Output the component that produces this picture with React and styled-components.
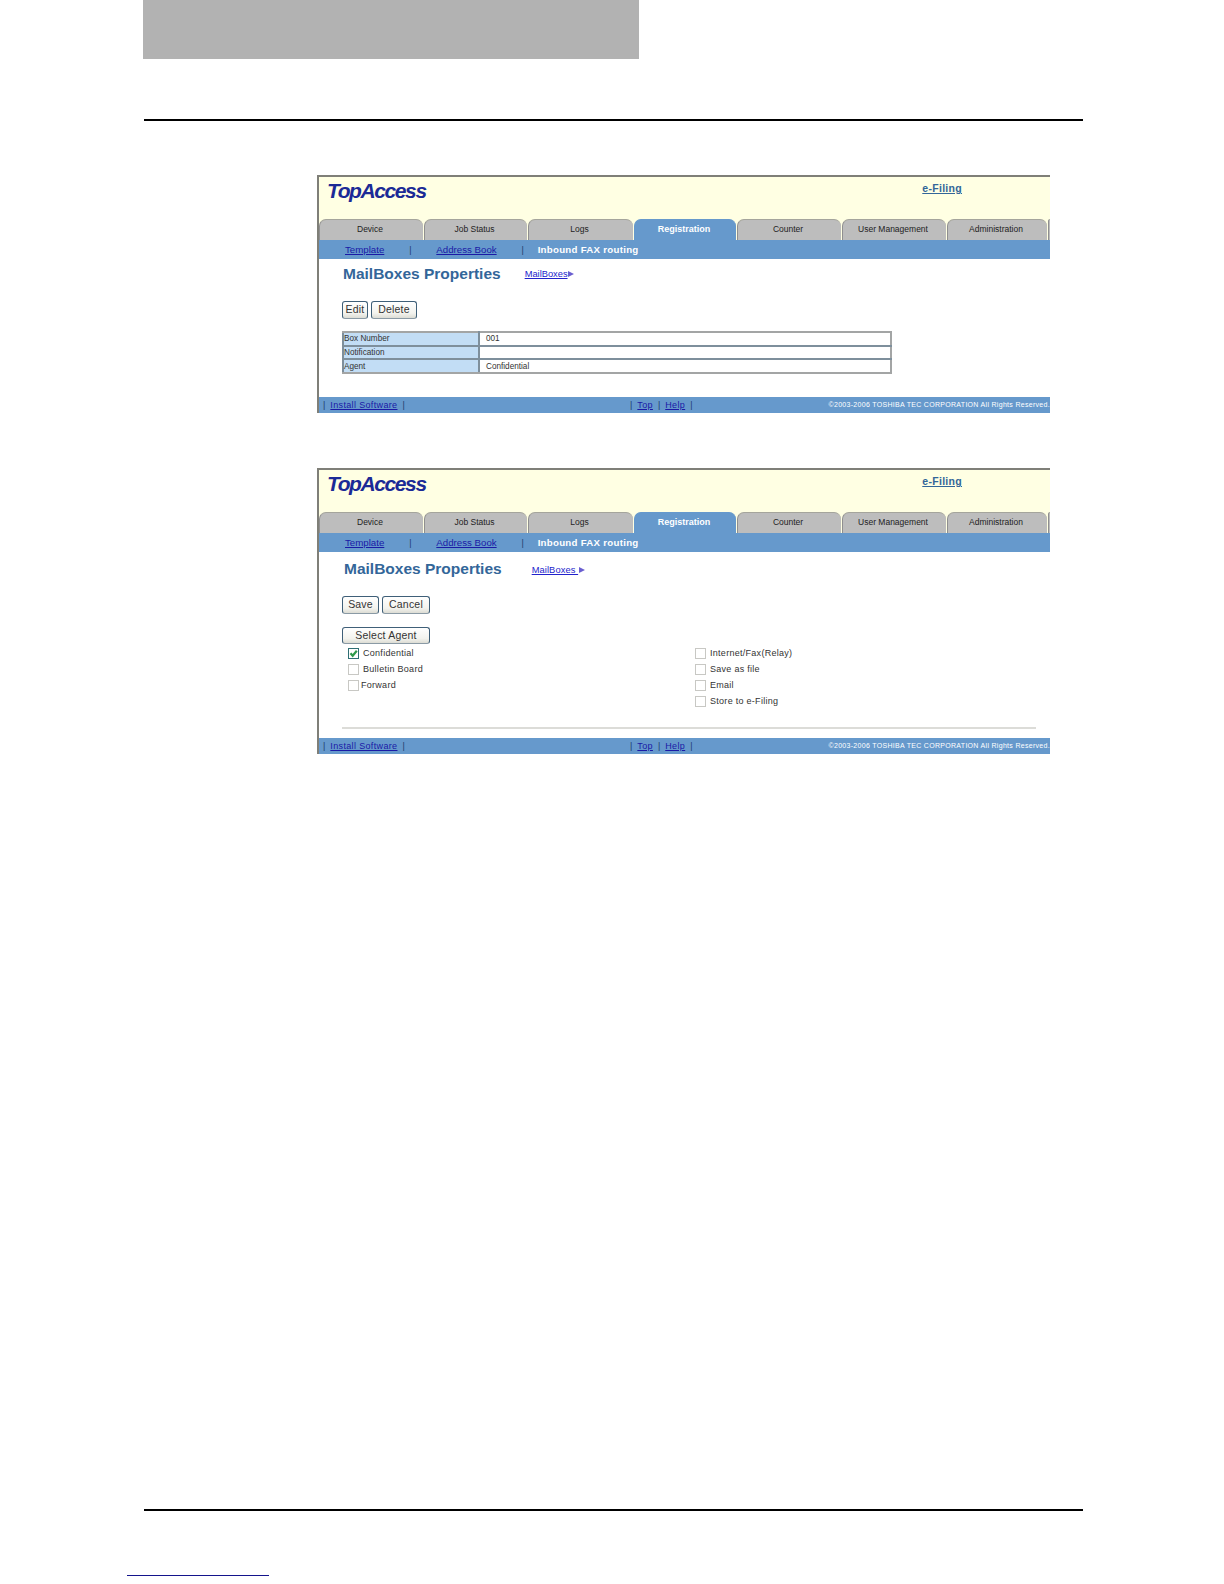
import React from "react";
import styled, { createGlobalStyle } from "styled-components";

const GlobalStyle = createGlobalStyle`
  html, body {
    margin: 0;
    padding: 0;
    background: #fff;
    font-family: "Liberation Sans", Arial, sans-serif;
  }
`;

const Page = styled.div`
  width: 1224px;
  height: 1584px;
  overflow: hidden;
`;

const ChapterBlock = styled.div`
  width: 496px;
  height: 59px;
  margin-left: 143px;
  background: #b2b2b2;
`;

const PageRule = styled.div`
  width: 939px;
  height: 2px;
  margin-left: 144px;
  margin-top: ${(p) => p.$top}px;
  background: #000;
`;

const Shot = styled.div`
  box-sizing: border-box;
  width: 733px;
  height: ${(p) => p.$height}px;
  margin-left: 317px;
  margin-top: ${(p) => p.$top}px;
  border-top: 2px solid #7f7f78;
  border-left: 2px solid #7f7f78;
  display: flex;
  flex-direction: column;
  overflow: hidden;
`;

const Header = styled.div`
  height: 42px;
  flex: none;
  display: flex;
  justify-content: space-between;
  padding: 0 88px 0 8px;
  box-sizing: border-box;
  background: #ffffe3;
`;

const Logo = styled.div`
  margin-top: 2px;
  font-size: 21px;
  line-height: 24px;
  font-weight: bold;
  font-style: italic;
  letter-spacing: -1.4px;
  color: #1b2a96;
`;

const FilingLink = styled.a`
  margin-top: 5px;
  font-size: 10.5px;
  line-height: 13px;
  font-weight: bold;
  letter-spacing: 0.3px;
  color: #336699;
  text-decoration: underline;
`;

const Tabs = styled.div`
  height: 21px;
  flex: none;
  display: grid;
  grid-template-columns: 104px 103px 105px 102px 104px 104px 100px 1fr;
  column-gap: 1px;
  background: #ffffe3;
`;

const Tab = styled.div`
  box-sizing: border-box;
  padding-right: 3px;
  border-radius: 7px 7px 0 0;
  border-top: 1px solid ${(p) => (p.$active ? "#6699cc" : "#a5a59c")};
  border-left: 1px solid ${(p) => (p.$active ? "#6699cc" : "#8f8f8f")};
  background: ${(p) => (p.$active ? "#6699cc" : "#bdbdbd")};
  color: ${(p) => (p.$active ? "#fff" : "#222")};
  font-size: ${(p) => (p.$active ? 9 : 8.5)}px;
  font-weight: ${(p) => (p.$active ? "bold" : "normal")};
  line-height: 19px;
  text-align: center;
  overflow: hidden;
`;

const SubNav = styled.div`
  height: 19px;
  flex: none;
  display: flex;
  align-items: center;
  padding-left: 26px;
  background: #6699cc;
  font-size: 9.7px;
`;

const NavLink = styled.a`
  color: #1a1aa6;
  text-decoration: underline;
`;

const NavBar = styled.span`
  width: 52px;
  text-align: center;
  color: #1f3f6f;
  font-size: 9px;
`;

const NavCurrent = styled.span`
  margin-left: -11px;
  color: #fff;
  font-weight: bold;
  letter-spacing: 0.27px;
`;

const Content = styled.div`
  flex: 1;
  display: flex;
  flex-direction: column;
  padding-left: 23px;
`;

const TitleRow = styled.div`
  height: ${(p) => p.$height}px;
  flex: none;
  display: flex;
  align-items: center;
  gap: ${(p) => p.$gap}px;
  padding-left: ${(p) => p.$indent}px;
`;

const Title = styled.h1`
  margin: 0;
  font-size: 15.5px;
  font-weight: bold;
  color: #336699;
  white-space: nowrap;
`;

const Crumb = styled.div`
  display: flex;
  align-items: center;
  margin-top: ${(p) => p.$drop || 0}px;
`;

const CrumbLink = styled.a`
  font-size: 9.3px;
  letter-spacing: ${(p) => p.$spacing || 0}px;
  color: #2222cc;
  text-decoration: underline;
  white-space: pre;
`;

const CrumbArrow = styled.span`
  width: 0;
  height: 0;
  margin-left: ${(p) => p.$left || 0}px;
  border-left: 6px solid #6a5fd0;
  border-top: 3.5px solid transparent;
  border-bottom: 3.5px solid transparent;
`;

const ButtonRow = styled.div`
  display: flex;
  gap: 3px;
  margin-top: ${(p) => p.$top}px;
`;

const Button = styled.button`
  box-sizing: border-box;
  width: ${(p) => p.$width}px;
  height: ${(p) => p.$height || 18}px;
  padding: 0 0 2px;
  border: 1px solid #3f5f78;
  border-bottom-color: #8a9aa5;
  border-radius: 3px;
  background: linear-gradient(#ffffff, #f3f3ee 70%, #dcdcd4);
  color: #333;
  font-family: inherit;
  font-size: 10.5px;
  letter-spacing: 0.2px;
`;

const InfoTable = styled.table`
  width: 550px;
  margin-top: 12px;
  border-collapse: collapse;
  table-layout: fixed;
  font-size: 8.2px;
  color: #333;

  td {
    border: 2px solid #7e8f9c;
  }
  tr:first-child td {
    border-top-color: #a3a5a5;
  }
  tr:last-child td {
    border-bottom-color: #a3a5a5;
  }
  td:last-child {
    border-right-color: #a3a5a5;
  }
`;

const LabelCell = styled.td`
  width: 134px;
  height: 11.67px;
  padding: 0;
  background: #c2ddf5;
`;

const ValueCell = styled.td`
  height: 11.67px;
  padding: 0 0 0 6px;
  background: #fff;
`;

const AgentGrid = styled.div`
  display: grid;
  grid-template-columns: 347px 1fr;
  margin-top: 1px;
  padding-left: 6px;
`;

const AgentColumn = styled.div`
  display: flex;
  flex-direction: column;
`;

const AgentRow = styled.div`
  height: 16px;
  display: flex;
  align-items: center;
  gap: ${(p) => p.$gap}px;
  font-size: 9px;
  letter-spacing: 0.28px;
  color: #333;
`;

const CheckBox = styled.span`
  box-sizing: border-box;
  width: 11px;
  height: 11px;
  flex: none;
  display: flex;
  border: 1px solid ${(p) => (p.$checked ? "#2f6f74" : "#c8c8c4")};
  background: #fff;
`;

const Divider = styled.div`
  width: 694px;
  height: 2px;
  margin-top: 18px;
  background: #dcdcd8;
`;

const Footer = styled.div`
  flex: none;
  height: 16px;
  display: grid;
  grid-template-columns: 307px 1fr auto;
  align-items: center;
  padding-left: 4px;
  background: #6699cc;
  font-size: 9px;
  color: #1f3f6f;
  white-space: nowrap;
`;

const FooterGroup = styled.div`
  display: flex;
  gap: 5px;
`;

const FooterLink = styled.a`
  color: #1a1aa6;
  text-decoration: underline;
  letter-spacing: 0.35px;
`;

const Copyright = styled.div`
  margin-top: -2px;
  color: #fff;
  font-size: 7px;
  letter-spacing: 0.3px;
`;

const FooterNote = styled.div`
  width: 142px;
  height: 1px;
  margin: 64px 0 0 127px;
  background: #14148c;
`;

const tabs = ["Device", "Job Status", "Logs", "Registration", "Counter", "User Management", "Administration", ""];
const leftAgents = [
  { name: "Confidential", checked: true, gap: 4 },
  { name: "Bulletin Board", gap: 4 },
  { name: "Forward", gap: 2 },
];
const rightAgents = ["Internet/Fax(Relay)", "Save as file", "Email", "Store to e-Filing"];

function Check() {
  return (
    <svg width="9" height="9" viewBox="0 0 9 9">
      <path d="M1.5 4.2 L3.7 6.8 L7.8 1.8" fill="none" stroke="#2f9a4a" strokeWidth="2.2" />
    </svg>
  );
}

function Window({ top, height, children }) {
  return (
    <Shot $top={top} $height={height}>
      <Header>
        <Logo>TopAccess</Logo>
        <FilingLink>e-Filing</FilingLink>
      </Header>
      <Tabs>
        {tabs.map((t) => (
          <Tab key={t} $active={t === "Registration"}>{t}</Tab>
        ))}
      </Tabs>
      <SubNav>
        <NavLink>Template</NavLink>
        <NavBar>|</NavBar>
        <NavLink>Address Book</NavLink>
        <NavBar>|</NavBar>
        <NavCurrent>Inbound FAX routing</NavCurrent>
      </SubNav>
      <Content>{children}</Content>
      <Footer>
        <FooterGroup>
          | <FooterLink>Install Software</FooterLink> |
        </FooterGroup>
        <FooterGroup>
          | <FooterLink>Top</FooterLink> | <FooterLink>Help</FooterLink> |
        </FooterGroup>
        <Copyright>©2003-2006 TOSHIBA TEC CORPORATION All Rights Reserved.</Copyright>
      </Footer>
    </Shot>
  );
}

export default function App() {
  return (
    <Page>
      <GlobalStyle />
      <ChapterBlock />
      <PageRule $top={60} />

      <Window top={54} height={238}>
        <TitleRow $height={30} $gap={24} $indent={1}>
          <Title>MailBoxes Properties</Title>
          <Crumb>
            <CrumbLink>MailBoxes</CrumbLink>
            <CrumbArrow />
          </Crumb>
        </TitleRow>
        <ButtonRow $top={12}>
          <Button $width={26}>Edit</Button>
          <Button $width={46}>Delete</Button>
        </ButtonRow>
        <InfoTable>
          <tbody>
            <tr>
              <LabelCell>Box Number</LabelCell>
              <ValueCell>001</ValueCell>
            </tr>
            <tr>
              <LabelCell>Notification</LabelCell>
              <ValueCell />
            </tr>
            <tr>
              <LabelCell>Agent</LabelCell>
              <ValueCell>Confidential</ValueCell>
            </tr>
          </tbody>
        </InfoTable>
      </Window>

      <Window top={55} height={286}>
        <TitleRow $height={33} $gap={30} $indent={2}>
          <Title>MailBoxes Properties</Title>
          <Crumb $drop={2}>
            <CrumbLink $spacing={0.1}>MailBoxes </CrumbLink>
            <CrumbArrow $left={1} />
          </Crumb>
        </TitleRow>
        <ButtonRow $top={11}>
          <Button $width={37}>Save</Button>
          <Button $width={48}>Cancel</Button>
        </ButtonRow>
        <ButtonRow $top={13}>
          <Button $width={88} $height={17}>Select Agent</Button>
        </ButtonRow>
        <AgentGrid>
          <AgentColumn>
            {leftAgents.map((a) => (
              <AgentRow key={a.name} $gap={a.gap}>
                <CheckBox $checked={a.checked}>{a.checked && <Check />}</CheckBox>
                {a.name}
              </AgentRow>
            ))}
          </AgentColumn>
          <AgentColumn>
            {rightAgents.map((name) => (
              <AgentRow key={name} $gap={4}>
                <CheckBox />
                {name}
              </AgentRow>
            ))}
          </AgentColumn>
        </AgentGrid>
        <Divider />
      </Window>

      <PageRule $top={755} />
      <FooterNote />
    </Page>
  );
}
